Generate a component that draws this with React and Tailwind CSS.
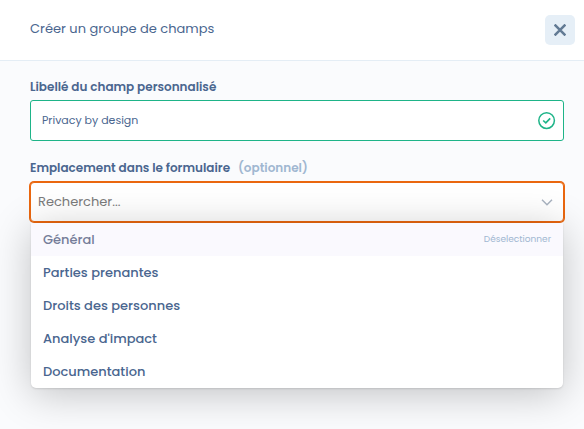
import React from "react";

const options = [
  "Général",
  "Parties prenantes",
  "Droits des personnes",
  "Analyse d'impact",
  "Documentation",
];

function CloseIcon() {
  return (
    <svg className="size-3" viewBox="0 0 12 12" fill="none" stroke="currentColor" strokeWidth="2.5" aria-hidden="true">
      <path d="M0.6 0.6 11.4 11.4M11.4 0.6 0.6 11.4" />
    </svg>
  );
}

function ValidIcon() {
  return (
    <svg className="size-[18px] shrink-0 text-[#1eb488]" viewBox="0 0 18 18" fill="none" stroke="currentColor" aria-hidden="true">
      <circle cx="8.6" cy="8.6" r="7.8" strokeWidth="1.5" />
      <path d="M5.2 8.5 7.8 10.9 12.2 6.4" strokeWidth="1.7" />
    </svg>
  );
}

function ChevronIcon() {
  return (
    <svg className="h-[7px] w-3 shrink-0 text-[#a9b3c0]" viewBox="0 0 12 7" fill="none" stroke="currentColor" strokeWidth="1.5" aria-hidden="true">
      <path d="M1 0.8 6 5.8 11 0.8" />
    </svg>
  );
}

export default function App() {
  return (
    <div className="min-h-screen overflow-hidden bg-[#fafbfd] font-[Poppins,Inter,sans-serif] text-[#4a668f]">
      <header className="flex h-[61px] items-center justify-between border-b border-[#e4edf5] bg-white pr-[9px] pl-[30px]">
        <h1 className="pb-0.5 text-[13px] leading-5">Créer un groupe de champs</h1>
        <button type="button" aria-label="Fermer" className="flex size-[30px] items-center justify-center rounded-[5px] bg-[#e6eff7] text-[#627a94]">
          <CloseIcon />
        </button>
      </header>

      <form className="flex flex-col gap-[17px] px-5 pt-4 pl-[30px]">
        <div>
          <label htmlFor="libelle" className="block pb-[3px] text-[12px] leading-5 font-semibold">
            Libellé du champ personnalisé
          </label>
          <div className="flex h-[41px] items-center rounded-[3px] border border-[#1eb488] bg-white pr-[7px] pl-[11px]">
            <input id="libelle" type="text" defaultValue="Privacy by design" className="min-w-0 flex-1 text-[11px] outline-none" />
            <ValidIcon />
          </div>
        </div>

        <div>
          <label htmlFor="emplacement" className="flex gap-2 pb-1 text-[12px] leading-5 font-semibold">
            Emplacement dans le formulaire
            <span className="text-[#a0b7d1]">(optionnel)</span>
          </label>
          <div className="relative">
            <div className="flex h-10 items-center rounded-[4px] border border-[#ea670f] bg-white pr-[10px] pl-[7px] ring-1 ring-[#ea670f]">
              <input
                id="emplacement"
                type="text"
                role="combobox"
                aria-expanded="true"
                aria-controls="emplacement-options"
                placeholder="Rechercher..."
                className="min-w-0 flex-1 text-[13px] outline-none placeholder:text-[#7b7b7b]"
              />
              <ChevronIcon />
            </div>
            <ul
              id="emplacement-options"
              role="listbox"
              className="absolute inset-x-px top-[41px] overflow-hidden rounded-b-[5px] bg-white text-[13px] leading-[33px] font-medium shadow-[0_1px_2px_rgba(0,0,0,0.12),0_6px_40px_rgba(0,0,0,0.23)]"
            >
              {options.map((option, index) => (
                <li
                  key={option}
                  role="option"
                  aria-selected={index === 0}
                  className="flex h-[33px] items-center justify-between px-3 aria-selected:bg-[#faf9fe] aria-selected:text-[#757d99]"
                >
                  {option}
                  {index === 0 && <span className="text-[9px] font-normal text-[#a0b7d1]">Déselectionner</span>}
                </li>
              ))}
            </ul>
          </div>
        </div>
      </form>
    </div>
  );
}
